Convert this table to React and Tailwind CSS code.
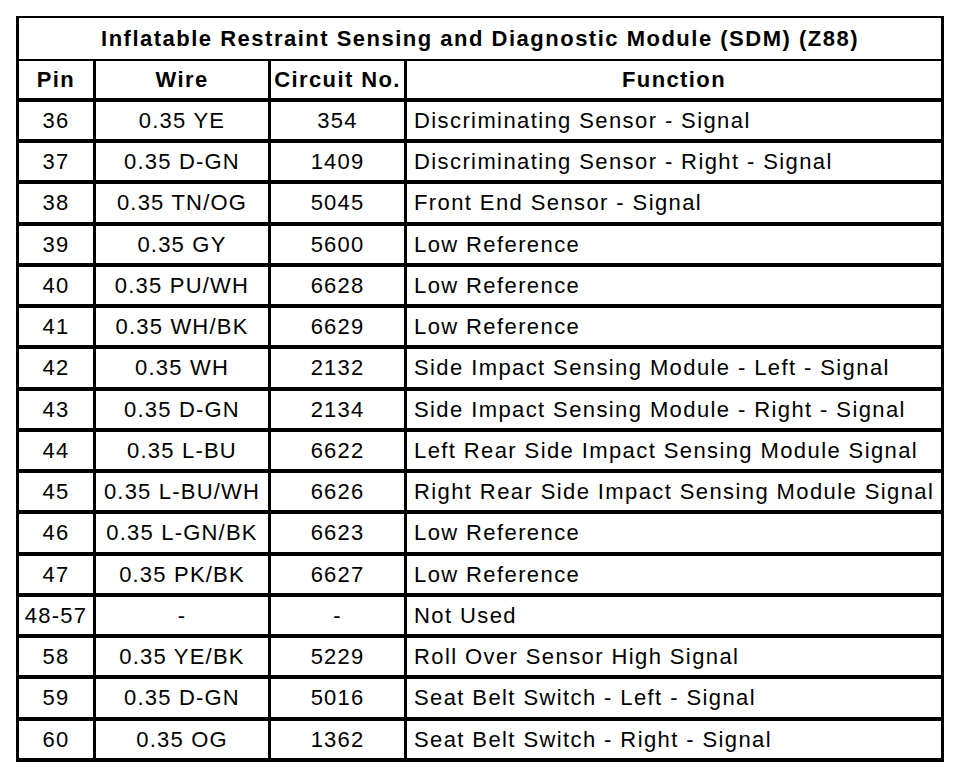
import React from "react";

const rows = [
  ["36", "0.35 YE", "354", "Discriminating Sensor - Signal", "h-[37px]"],
  ["37", "0.35 D-GN", "1409", "Discriminating Sensor - Right - Signal", "h-[37px]"],
  ["38", "0.35 TN/OG", "5045", "Front End Sensor - Signal", "h-[38px]"],
  ["39", "0.35 GY", "5600", "Low Reference", "h-[37px]"],
  ["40", "0.35 PU/WH", "6628", "Low Reference", "h-[37px]"],
  ["41", "0.35 WH/BK", "6629", "Low Reference", "h-[37px]"],
  ["42", "0.35 WH", "2132", "Side Impact Sensing Module - Left - Signal", "h-[38px]"],
  ["43", "0.35 D-GN", "2134", "Side Impact Sensing Module - Right - Signal", "h-[37px]"],
  ["44", "0.35 L-BU", "6622", "Left Rear Side Impact Sensing Module Signal", "h-[37px]"],
  ["45", "0.35 L-BU/WH", "6626", "Right Rear Side Impact Sensing Module Signal", "h-[37px]"],
  ["46", "0.35 L-GN/BK", "6623", "Low Reference", "h-[38px]"],
  ["47", "0.35 PK/BK", "6627", "Low Reference", "h-[37px]"],
  ["48-57", "-", "-", "Not Used", "h-[37px]"],
  ["58", "0.35 YE/BK", "5229", "Roll Over Sensor High Signal", "h-[37px]"],
  ["59", "0.35 D-GN", "5016", "Seat Belt Switch - Left - Signal", "h-[38px]"],
  ["60", "0.35 OG", "1362", "Seat Belt Switch - Right - Signal", "h-[37px]"],
];

const font = { fontFamily: '"Liberation Sans", Arial, sans-serif' };

const head = "h-[37px] bg-white flex items-center justify-center text-[22px] font-bold leading-none tracking-[1.4px] whitespace-nowrap";

export default function App() {
  return (
    <div className="w-[960px] h-[776px] bg-white pt-[16px] pl-[16px]" style={font}>
      <div className="w-[928px] bg-black px-[3px] pt-[2px] pb-[4px] flex flex-col text-black">
        <div className="h-[41px] bg-white flex items-center justify-center text-[22px] font-bold leading-none tracking-[1.5px] whitespace-nowrap">
          Inflatable Restraint Sensing and Diagnostic Module (SDM) (Z88)
        </div>
        <div className="h-[2px]" />
        <div className="grid grid-cols-[74px_172px_133px_534px] gap-x-[3px] gap-y-[4px]">
          <div className={head}>Pin</div>
          <div className={head}>Wire</div>
          <div className={head}>Circuit No.</div>
          <div className={head}>Function</div>
          {rows.map((r) => (
            <React.Fragment key={r[0]}>
              <div className={`${r[4]} bg-white flex items-center justify-center text-[22px] leading-none tracking-[1.2px] whitespace-nowrap`}>{r[0]}</div>
              <div className={`${r[4]} bg-white flex items-center justify-center text-[22px] leading-none tracking-[1.2px] whitespace-nowrap`}>{r[1]}</div>
              <div className={`${r[4]} bg-white flex items-center justify-center text-[22px] leading-none tracking-[1.2px] whitespace-nowrap`}>{r[2]}</div>
              <div className={`${r[4]} bg-white flex items-center pl-[7px] text-[22px] leading-none tracking-[1.4px] whitespace-nowrap`}>{r[3]}</div>
            </React.Fragment>
          ))}
        </div>
      </div>
    </div>
  );
}
